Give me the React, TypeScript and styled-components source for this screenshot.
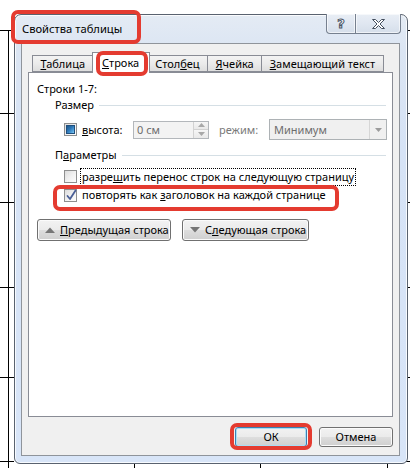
import React from 'react';
import styled, { createGlobalStyle } from 'styled-components';

const GlobalStyle = createGlobalStyle`
  html, body { margin: 0; padding: 0; background: #ffffff; }
  body {
    font-family: "Noto Sans", "Open Sans", sans-serif;
    font-size: 11px;
    color: #000;
  }
  * { box-sizing: border-box; }
  u { text-decoration: underline; text-underline-offset: 1px; }
`;

const Page = styled.div`
  position: relative;
  width: 410px;
  height: 468px;
  overflow: hidden;
  padding: 14px 0 0 14px;
`;

const GridLines = styled.svg`
  position: absolute;
  left: 0;
  top: 0;
  width: 410px;
  height: 468px;
`;

const Window = styled.div`
  position: relative;
  width: 394px;
  height: 450px;
  border: 1px solid #59626f;
  border-radius: 7px 7px 6px 6px;
  background: linear-gradient(180deg, #e4ebf4 0%, #dbe5f3 8%, #d6e3f6 30%, #d8e5f8 100%);
  box-shadow: inset 0 0 0 1px rgba(255, 255, 255, 0.8);
  display: flex;
  flex-direction: column;
`;

const TitleBar = styled.div`
  height: 28px;
  display: flex;
  justify-content: space-between;
  align-items: flex-start;
  padding-left: 7px;
`;

const Title = styled.div`
  position: relative;
  margin-top: 6px;
  line-height: 16px;
  height: 16px;
  font-size: 11.2px;
  color: #000;
`;

const RedFrame = styled.span<{ $t: number; $r: number; $b: number; $l: number }>`
  position: absolute;
  top: ${(p) => p.$t}px;
  right: ${(p) => p.$r}px;
  bottom: ${(p) => p.$b}px;
  left: ${(p) => p.$l}px;
  border: 4px solid #e43b30;
  border-radius: 7px;
  pointer-events: none;
  z-index: 5;
`;

const CaptionButtons = styled.div`
  display: flex;
  margin-right: 6px;
  margin-top: -1px;
`;

const CaptionButton = styled.div<{ $w: number; $first?: boolean; $last?: boolean }>`
  width: ${(p) => p.$w}px;
  height: 20px;
  border: 1px solid #76808f;
  border-top: none;
  margin-left: ${(p) => (p.$first ? 0 : -1)}px;
  border-bottom-left-radius: ${(p) => (p.$first ? 4 : 0)}px;
  border-bottom-right-radius: ${(p) => (p.$last ? 4 : 0)}px;
  background: linear-gradient(180deg, #e9eef5 0%, #e0e7f1 50%, #d5deea 100%);
  box-shadow: inset 0 0 0 1px rgba(255, 255, 255, 0.6);
  display: flex;
  align-items: center;
  justify-content: center;
`;

const HelpGlyph = styled.span`
  font-family: "DejaVu Sans", sans-serif;
  font-weight: bold;
  font-size: 13px;
  line-height: 13px;
  color: #ffffff;
  -webkit-text-stroke: 1px #4a5566;
`;

const Client = styled.div`
  height: 413px;
  margin: 0 7px 0 6px;
  border: 1px solid #8f949b;
  background: #f0f0f0;
  display: flex;
  flex-direction: column;
`;

const TabStrip = styled.div`
  display: flex;
  align-items: flex-end;
  height: 20px;
  margin: 8px 6px 0 6px;
  padding-left: 4px;
`;

const Tab = styled.div<{ $active?: boolean }>`
  position: relative;
  height: ${(p) => (p.$active ? 21 : 17)}px;
  margin: ${(p) => (p.$active ? '0 -2px -1px -2px' : '0 0 0 -1px')};
  padding: ${(p) => (p.$active ? '2px 9.5px 0' : '0 7.5px')};
  line-height: 16px;
  border: 1px solid #898c95;
  border-bottom: ${(p) => (p.$active ? 'none' : '1px solid #898c95')};
  background: ${(p) =>
    p.$active ? '#ffffff' : 'linear-gradient(180deg, #f3f3f3 0%, #ebebeb 50%, #dedede 100%)'};
  z-index: ${(p) => (p.$active ? 2 : 1)};
  white-space: nowrap;
  &:first-child {
    margin-left: 0;
  }
`;

const Panel = styled.div`
  height: 345px;
  margin: 0 6px;
  border: 1px solid #898c95;
  background: #ffffff;
  padding: 8px 6px 0 8px;
  display: flex;
  flex-direction: column;
  align-items: flex-start;
`;

const TextLine = styled.div`
  height: 16px;
  line-height: 16px;
  white-space: nowrap;
`;

const GroupHeader = styled.div<{ $mt: number }>`
  align-self: stretch;
  display: flex;
  align-items: center;
  height: 16px;
  line-height: 16px;
  margin: ${(p) => p.$mt}px 0 0 18px;
  white-space: nowrap;
  &::after {
    content: '';
    flex: 1;
    height: 1px;
    margin-left: 5px;
    background: #d5dfe5;
  }
`;

const SizeRow = styled.div`
  display: flex;
  align-items: center;
  height: 21px;
  margin: 6px 0 0 27px;
`;

const CheckBox = styled.span`
  width: 13px;
  height: 13px;
  flex: none;
  border: 1px solid #8e8f8f;
  background: linear-gradient(135deg, #dcdcdc 0%, #f0f0f0 50%, #fdfdfd 100%);
  display: flex;
  align-items: center;
  justify-content: center;
  position: relative;
`;

const BlueFill = styled.span`
  width: 9px;
  height: 9px;
  border: 1px solid #1f4f7d;
  background: linear-gradient(135deg, #1c5688 0%, #2e78b8 45%, #58a8e0 80%, #8ccdf3 100%);
`;

const CheckMark = styled.svg`
  position: absolute;
  left: 0;
  top: -2px;
`;

const FieldLabel = styled.span<{ $w: number; $ml: number; $muted?: boolean }>`
  width: ${(p) => p.$w}px;
  margin-left: ${(p) => p.$ml}px;
  color: ${(p) => (p.$muted ? '#7a7a7a' : '#000')};
  white-space: nowrap;
`;

const SpinInput = styled.div`
  width: 76px;
  height: 18px;
  border: 1px solid #b3b7bb;
  background: #f3f3f3;
  display: flex;
  align-items: stretch;
`;

const InputText = styled.span`
  flex: 1;
  padding-left: 3px;
  line-height: 16px;
  color: #6d6d6d;
`;

const Spinner = styled.div`
  width: 15px;
  display: flex;
  flex-direction: column;
  border-left: 1px solid #d2d2d2;
`;

const SpinHalf = styled.div`
  flex: 1;
  display: flex;
  align-items: center;
  justify-content: center;
  background: linear-gradient(180deg, #f6f6f6, #e9e9e9);
  & + & {
    border-top: 1px solid #d2d2d2;
  }
`;

const Select = styled.div`
  width: 118px;
  height: 21px;
  border: 1px solid #adb2b5;
  background: #f0f0f0;
  display: flex;
  align-items: stretch;
`;

const SelectText = styled.span`
  flex: 1;
  padding-left: 4px;
  line-height: 19px;
  color: #6d6d6d;
`;

const SelectArrow = styled.div`
  width: 17px;
  border-left: 1px solid #d6d6d6;
  display: flex;
  align-items: center;
  justify-content: center;
`;

const OptionRow = styled.div<{ $mt?: number }>`
  position: relative;
  display: flex;
  align-items: center;
  height: 19px;
  margin: ${(p) => p.$mt ?? 0}px 0 0 27px;
`;

const OptionLabel = styled.span<{ $focus?: boolean }>`
  margin-left: ${(p) => (p.$focus ? 3 : 5)}px;
  padding: 0 ${(p) => (p.$focus ? 1 : 0)}px;
  height: 18px;
  line-height: 16px;
  border: ${(p) => (p.$focus ? '1px dotted #000' : 'none')};
  white-space: nowrap;
`;

const NavRow = styled.div`
  display: flex;
  gap: 11px;
  margin-top: 14px;
`;

const PushButton = styled.div<{ $w: number; $default?: boolean }>`
  width: ${(p) => p.$w}px;
  height: 22px;
  border: 1px solid ${(p) => (p.$default ? '#3c7fb1' : '#707070')};
  border-radius: 3px;
  background: linear-gradient(180deg, #f2f2f2 0%, #ebebeb 48%, #dddddd 52%, #cfcfcf 100%);
  box-shadow: inset 0 0 0 1px ${(p) => (p.$default ? '#a9def5' : '#fbfbfb')};
  display: flex;
  align-items: center;
  white-space: nowrap;
  line-height: 16px;
`;

const NavButton = styled(PushButton)`
  padding-left: 7px;
  gap: 5px;
`;

const DialogButton = styled(PushButton)`
  height: 20px;
  justify-content: center;
`;

const Footer = styled.div`
  display: flex;
  justify-content: flex-end;
  gap: 12px;
  margin: 10px 6px 0 0;
`;

const OkWrap = styled.div`
  position: relative;
`;

const Triangle = ({ up }: { up?: boolean }) => (
  <svg width="10" height="6" viewBox="0 0 10 6">
    <polygon points={up ? '0,6 5,0.5 10,6' : '0,0 10,0 5,5.5'} fill="#767676" />
  </svg>
);

const SmallArrow = ({ up, color = '#a8a8a8' }: { up?: boolean; color?: string }) => (
  <svg width="7" height="4" viewBox="0 0 7 4">
    <polygon points={up ? '0,4 3.5,0 7,4' : '0,0 7,0 3.5,4'} fill={color} />
  </svg>
);

export default function App() {
  const ticks = [113, 202, 287, 377, 461];
  return (
    <>
      <GlobalStyle />
      <Page>
        <GridLines viewBox="0 0 410 468" shapeRendering="crispEdges">
          <g stroke="#000" strokeWidth="1">
            <line x1="0" y1="30.5" x2="14" y2="30.5" />
            <line x1="406" y1="30.5" x2="410" y2="30.5" />
            <line x1="8.5" y1="30" x2="8.5" y2="468" />
            {ticks.map((y) => (
              <React.Fragment key={y}>
                <line x1="0" y1={y + 0.5} x2="14" y2={y + 0.5} />
                <line x1="406" y1={y + 0.5} x2="410" y2={y + 0.5} />
              </React.Fragment>
            ))}
            <line x1="134.5" y1="463" x2="134.5" y2="468" />
            <line x1="260.5" y1="463" x2="260.5" y2="468" />
            <line x1="387.5" y1="463" x2="387.5" y2="468" />
          </g>
        </GridLines>

        <Window>
          <TitleBar>
            <Title>
              Свойства таблицы
              <RedFrame $t={-11} $r={-19} $b={-7} $l={-11} />
            </Title>
            <CaptionButtons>
              <CaptionButton $w={30} $first>
                <HelpGlyph>?</HelpGlyph>
              </CaptionButton>
              <CaptionButton $w={46} $last>
                <svg width="15" height="12" viewBox="0 0 15 12">
                  <polygon
                    points="1.5,1.5 4.5,1.5 7.5,4.5 10.5,1.5 13.5,1.5 9,6 13.5,10.5 10.5,10.5 7.5,7.5 4.5,10.5 1.5,10.5 6,6"
                    fill="#ffffff"
                    stroke="#454f5e"
                    strokeWidth="1"
                    strokeLinejoin="round"
                  />
                </svg>
              </CaptionButton>
            </CaptionButtons>
          </TitleBar>

          <Client>
            <TabStrip>
              <Tab>
                <u>Т</u>аблица
              </Tab>
              <Tab $active>
                <u>С</u>трока
                <RedFrame $t={-2} $r={1} $b={-3} $l={3} />
              </Tab>
              <Tab>
                Стол<u>б</u>ец
              </Tab>
              <Tab>
                <u>Я</u>чейка
              </Tab>
              <Tab>
                <u>З</u>амещающий текст
              </Tab>
            </TabStrip>

            <Panel>
              <TextLine>Строки 1-7:</TextLine>
              <GroupHeader $mt={0}>Размер</GroupHeader>
              <SizeRow>
                <CheckBox>
                  <BlueFill />
                </CheckBox>
                <FieldLabel $w={51} $ml={5}>
                  <u>в</u>ысота:
                </FieldLabel>
                <SpinInput>
                  <InputText>0 см</InputText>
                  <Spinner>
                    <SpinHalf>
                      <SmallArrow up />
                    </SpinHalf>
                    <SpinHalf>
                      <SmallArrow />
                    </SpinHalf>
                  </Spinner>
                </SpinInput>
                <FieldLabel $w={50} $ml={10} $muted>
                  режим:
                </FieldLabel>
                <Select>
                  <SelectText>Минимум</SelectText>
                  <SelectArrow>
                    <SmallArrow color="#9c9c9c" />
                  </SelectArrow>
                </Select>
              </SizeRow>

              <GroupHeader $mt={7}>
                П<u>а</u>раметры
              </GroupHeader>
              <OptionRow $mt={4}>
                <CheckBox />
                <OptionLabel $focus>
                  разре<u>ш</u>ить перенос строк на следующую страницу
                </OptionLabel>
              </OptionRow>
              <OptionRow>
                <CheckBox>
                  <CheckMark width="13" height="14" viewBox="0 0 13 14">
                    <path
                      d="M2.5 8 L5 11 L10.5 2.5"
                      fill="none"
                      stroke="#4a5f96"
                      strokeWidth="1.8"
                      strokeLinecap="round"
                      strokeLinejoin="round"
                    />
                  </CheckMark>
                </CheckBox>
                <OptionLabel>
                  повторять как <u>з</u>аголовок на каждой странице
                </OptionLabel>
                <RedFrame $t={-1} $r={-13} $b={-6} $l={-11} />
              </OptionRow>

              <NavRow>
                <NavButton $w={134}>
                  <Triangle up />
                  <span>
                    <u>П</u>редыдущая строка
                  </span>
                </NavButton>
                <NavButton $w={127}>
                  <Triangle />
                  <span>
                    С<u>л</u>едующая строка
                  </span>
                </NavButton>
              </NavRow>
            </Panel>

            <Footer>
              <OkWrap>
                <DialogButton $w={72} $default>
                  ОК
                </DialogButton>
                <RedFrame $t={-4} $r={-5} $b={-3} $l={-5} />
              </OkWrap>
              <DialogButton $w={74}>Отмена</DialogButton>
            </Footer>
          </Client>
        </Window>
      </Page>
    </>
  );
}
